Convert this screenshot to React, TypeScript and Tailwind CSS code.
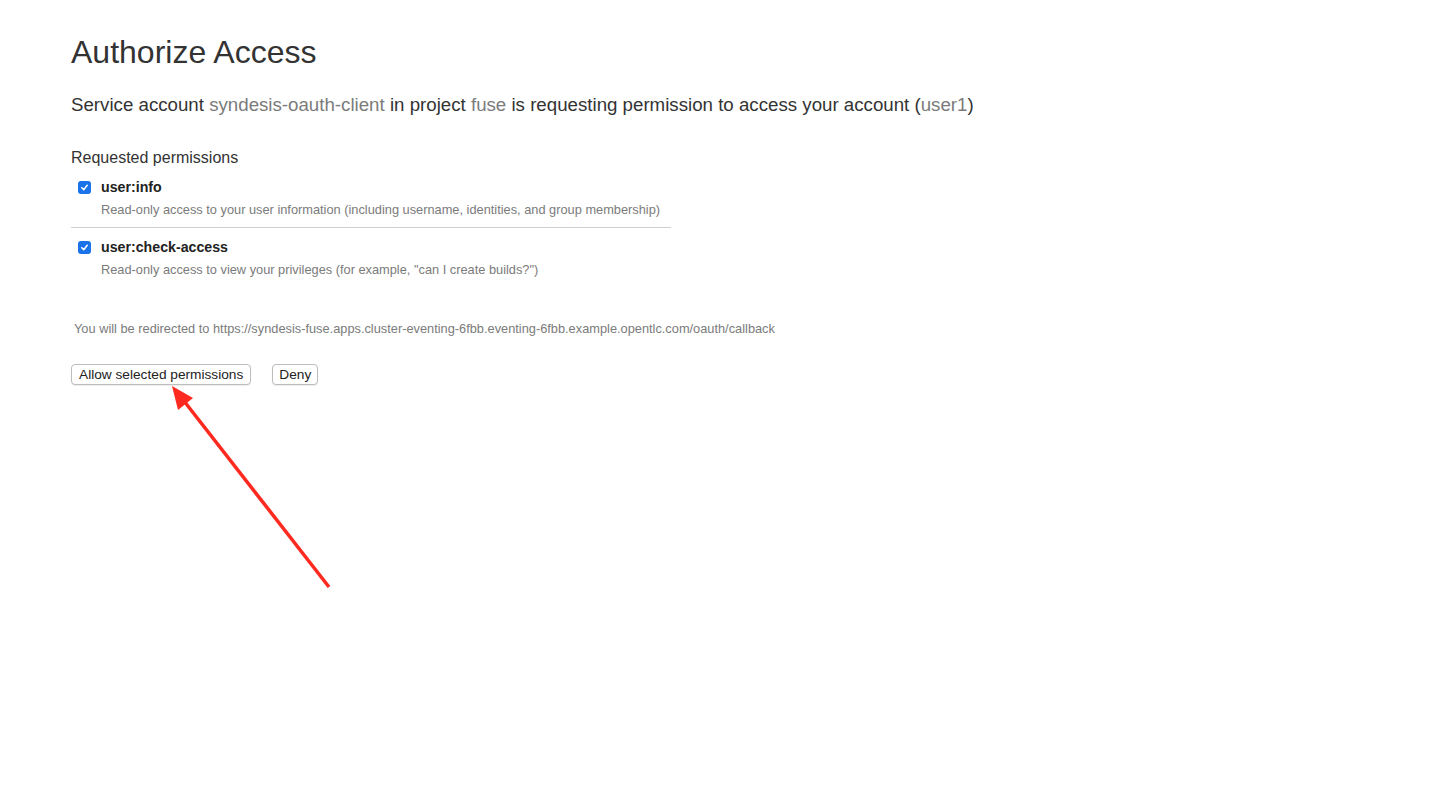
import React from "react";

const permissions = [
  {
    name: "user:info",
    description:
      "Read-only access to your user information (including username, identities, and group membership)",
  },
  {
    name: "user:check-access",
    description:
      'Read-only access to view your privileges (for example, "can I create builds?")',
  },
];

const CheckBox: React.FC = () => (
  <span className="flex h-[13px] w-[13px] shrink-0 items-center justify-center rounded-[3px] bg-[#1a73e8]">
    <svg width="9" height="9" viewBox="0 0 10 10" fill="none">
      <path d="M2 5.2 4.2 7.4 8 2.6" stroke="white" strokeWidth="1.7" strokeLinecap="round" strokeLinejoin="round" />
    </svg>
  </span>
);

export default function App() {
  return (
    <div className="relative h-[787px] w-full overflow-hidden bg-white font-['Liberation_Sans',Arial,sans-serif] text-[#333]">
      <div className="px-[71px] pt-[33px]">
        <h1 className="text-[32px] leading-[38px] font-normal">Authorize Access</h1>

        <p className="mt-[22px] text-[18.7px] leading-[24px]">
          Service account <span className="text-[#7b7b7b]">syndesis-oauth-client</span> in project{" "}
          <span className="text-[#7b7b7b]">fuse</span> is requesting permission to access your account (
          <span className="text-[#7b7b7b]">user1</span>)
        </p>

        <div className="mt-[31px] text-[16px] leading-[20px]">Requested permissions</div>

        <div className="mt-[10px] w-[600px]">
          {permissions.map((p, i) => (
            <div
              key={p.name}
              className={i === 0 ? "border-b border-[#cfcfcf] pb-[8px]" : "pt-[10px]"}
            >
              <div className="flex items-center gap-[10px] pl-[7px]">
                <CheckBox />
                <span className="text-[14.2px] leading-[18px] font-bold text-[#222]">{p.name}</span>
              </div>
              <div className="mt-[5px] pl-[30px] text-[12.8px] leading-[18px] text-[#7b7b7b]">
                {p.description}
              </div>
            </div>
          ))}
        </div>

        <div className="mt-[42px] pl-[3px] text-[12.8px] leading-[16px] text-[#7b7b7b]">
          You will be redirected to
          https://syndesis-fuse.apps.cluster-eventing-6fbb.eventing-6fbb.example.opentlc.com/oauth/callback
        </div>

        <div className="mt-[27px] flex items-center gap-[21px]">
          <button className="h-[21px] rounded-[4px] border border-[#bdbdbd] bg-white px-[7px] text-[13.7px] leading-[18px] text-[#222] shadow-[0_1px_1px_rgba(0,0,0,0.08)]">
            Allow selected permissions
          </button>
          <button className="h-[21px] rounded-[4px] border border-[#bdbdbd] bg-white px-[6px] text-[13.7px] leading-[18px] text-[#222] shadow-[0_1px_1px_rgba(0,0,0,0.08)]">
            Deny
          </button>
        </div>
      </div>

      <svg className="pointer-events-none absolute top-0 left-0" width="1439" height="787">
        <line x1="329" y1="587" x2="184" y2="401" stroke="#ff2a1f" strokeWidth="3.5" />
        <polygon points="172,386 193,398 178,410" fill="#ff2a1f" />
      </svg>
    </div>
  );
}
